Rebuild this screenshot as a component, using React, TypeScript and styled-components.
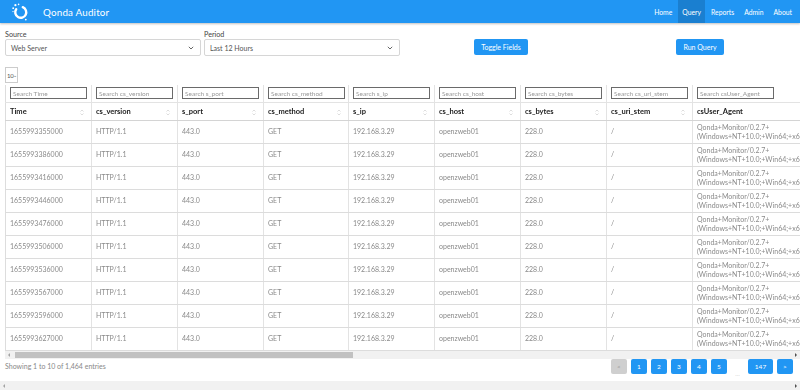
import React from "react";
import styled, { createGlobalStyle } from "styled-components";

const Global = createGlobalStyle`
  body {
    margin: 0;
    font-family: Lato, "Noto Sans", sans-serif;
    background: #fff;
    color: #333;
    -webkit-font-smoothing: antialiased;
    overflow: hidden;
  }
  * { box-sizing: border-box; }
`;

const NavBar = styled.header`
  height: 23px;
  background: #2196f3;
  display: flex;
  align-items: stretch;
  justify-content: space-between;
  box-shadow: 0 1px 2px rgba(0,0,0,0.25);
  padding-right: 4px;
`;
const Brand = styled.div`
  display: flex;
  align-items: center;
  gap: 14px;
  padding-left: 11px;
  color: #fff;
  font-size: 9.8px;
  letter-spacing: 0.2px;
`;
const NavList = styled.nav`
  display: flex;
  align-items: stretch;
`;
const NavItem = styled.a<{ $active?: boolean }>`
  display: flex;
  align-items: center;
  padding: 0 4px;
  margin-left: 2px;
  color: #fff;
  font-size: 6.8px;
  text-decoration: none;
  background: ${(p) => (p.$active ? "#1a7fd0" : "transparent")};
`;

const FormRow = styled.div`
  display: grid;
  grid-template-columns: repeat(4, 1fr);
  column-gap: 3px;
  padding: 7px 2px 0 5px;
  align-items: end;
`;
const Field = styled.div`
  display: flex;
  flex-direction: column;
`;
const Label = styled.label`
  font-size: 7.2px;
  line-height: 9px;
  font-weight: 400;
  color: #444;
`;
const SelectBox = styled.div`
  height: 17px;
  border: 1px solid #d6d6d6;
  border-radius: 2px;
  display: flex;
  align-items: center;
  justify-content: space-between;
  padding: 0 6px 0 5px;
  font-size: 7px;
  color: #555;
`;
const ButtonCell = styled.div`
  display: flex;
  justify-content: center;
  padding-bottom: 1px;
`;
const Button = styled.button`
  height: 16px;
  border: none;
  border-radius: 2px;
  background: #2196f3;
  color: #fff;
  font-family: inherit;
  font-size: 7px;
  padding: 0 7px;
`;

const LengthSelect = styled.div`
  margin: 11px 0 2px 5px;
  width: 13px;
  height: 16px;
  border: 1px solid #ccc;
  font-size: 6px;
  color: #555;
  display: flex;
  align-items: center;
  padding-left: 1px;
  letter-spacing: -0.3px;
`;

const TableWrap = styled.div`
  margin-left: 5px;
  overflow: hidden;
  will-change: transform;
`;
const Table = styled.table`
  border-collapse: collapse;
  table-layout: fixed;
  border-left: 1px solid #ddd;
`;
const SearchCell = styled.th`
  height: 17px;
  padding: 0 4px;
  border-right: 1px solid #e3e3e3;
  border-bottom: 1px solid #e3e3e3;
  text-align: left;
`;
const SearchInput = styled.div`
  width: 77px;
  height: 12px;
  border: 1px solid #6a6a6a;
  font-size: 6.5px;
  font-weight: normal;
  color: #999;
  display: flex;
  align-items: center;
  padding-left: 2px;
  white-space: nowrap;
  overflow: hidden;
`;
const HeadCell = styled.th`
  height: 18px;
  padding: 0 4px;
  border-right: 1px solid #e3e3e3;
  border-bottom: 1px solid #d4d4d4;
  text-align: left;
  font-size: 7.5px;
  font-weight: 700;
  color: #222;
  position: relative;
  white-space: nowrap;
`;
const SortIcon = styled.svg`
  position: absolute;
  right: 7px;
  top: 6px;
`;
const Cell = styled.td`
  height: 23px;
  padding: 0 4px;
  border-right: 1px solid #e3e3e3;
  border-bottom: 1px solid #dcdcdc;
  font-size: 7px;
  line-height: 8.5px;
  color: #8a8a8a;
  white-space: nowrap;
  overflow: hidden;
`;

const ScrollBar = styled.div<{ $h: number; $ml?: number }>`
  height: ${(p) => p.$h}px;
  margin-left: ${(p) => p.$ml ?? 0}px;
  background: #f1f1f1;
  display: flex;
  align-items: stretch;
`;
const ScrollArrow = styled.div<{ $dir: "left" | "right" }>`
  width: 8px;
  display: flex;
  align-items: center;
  justify-content: center;
  &::after {
    content: "";
    border-top: 2px solid transparent;
    border-bottom: 2px solid transparent;
    ${(p) => (p.$dir === "left" ? "border-right: 2px solid #a3a3a3;" : "border-left: 2px solid #505050;")}
  }
`;
const ScrollTrack = styled.div`
  flex: 1;
  display: flex;
  align-items: stretch;
  padding: 1px 0;
`;
const ScrollThumb = styled.div`
  background: #c1c1c1;
  margin-left: 2px;
`;

const Footer = styled.div`
  display: flex;
  justify-content: space-between;
  align-items: center;
  padding: 0 7px 0 5px;
  height: 15px;
  margin-bottom: 7px;
`;
const Info = styled.div`
  font-size: 7px;
  color: #888;
`;
const Pager = styled.div`
  display: flex;
  gap: 4px;
  align-items: center;
`;
const PageBtn = styled.div<{ $disabled?: boolean; $w?: number }>`
  height: 15px;
  width: ${(p) => p.$w ?? 16}px;
  border-radius: 2px;
  background: ${(p) => (p.$disabled ? "#cfcfcf" : "#2196f3")};
  color: ${(p) => (p.$disabled ? "#999" : "#fff")};
  font-size: 6.5px;
  display: flex;
  align-items: center;
  justify-content: center;
`;
const Ellipsis = styled.div`
  width: 13px;
  height: 15px;
  display: flex;
  align-items: flex-end;
  justify-content: center;
  font-size: 6px;
  color: #ccc;
  line-height: 5px;
  margin-bottom: -4px;
`;

const Logo = () => (
  <svg width="18" height="18" viewBox="0 0 18 18">
    <path d="M5.2 6.2 A5.5 5.5 0 1 0 11.8 4.2" fill="none" stroke="#fff" strokeWidth="2.4" strokeLinecap="round" />
    <circle cx="4.4" cy="2.2" r="1.1" fill="#fff" />
    <circle cx="2.2" cy="5.2" r="0.9" fill="#fff" />
    <circle cx="7.6" cy="1.4" r="0.8" fill="#fff" />
    <circle cx="2" cy="8.6" r="0.7" fill="#fff" />
    <circle cx="14.8" cy="16.6" r="0.9" fill="#fff" />
  </svg>
);

const Chevron = () => (
  <svg width="6" height="4" viewBox="0 0 6 4">
    <path d="M0.8 0.8 L3 3 L5.2 0.8" fill="none" stroke="#555" strokeWidth="0.9" />
  </svg>
);

const Sort = () => (
  <SortIcon width="4" height="7" viewBox="0 0 4 7">
    <path d="M0.5 2.5 L2 1 L3.5 2.5 M0.5 4.5 L2 6 L3.5 4.5" fill="none" stroke="#cfcfcf" strokeWidth="0.7" />
  </SortIcon>
);

const columns: { key: string; w: number }[] = [
  { key: "Time", w: 86 },
  { key: "cs_version", w: 86 },
  { key: "s_port", w: 86 },
  { key: "cs_method", w: 85 },
  { key: "s_ip", w: 86 },
  { key: "cs_host", w: 86 },
  { key: "cs_bytes", w: 86 },
  { key: "cs_uri_stem", w: 86 },
  { key: "csUser_Agent", w: 200 },
  { key: "cs_uri_query", w: 86 },
  { key: "cs_Referer", w: 86 },
  { key: "cs_username", w: 86 },
  { key: "c_ip", w: 86 },
  { key: "sc_status", w: 86 },
  { key: "sc_substatus", w: 86 },
  { key: "sc_win32_status", w: 86 },
  { key: "time_taken", w: 86 },
  { key: "s_sitename", w: 86 },
  { key: "s_computername", w: 86 },
  { key: "sc_bytes", w: 86 },
];
const totalWidth = columns.reduce((s, c) => s + c.w, 0);
const visibleWidth = 795;

const times = [
  "1655993355000", "1655993386000", "1655993416000", "1655993446000", "1655993476000",
  "1655993506000", "1655993536000", "1655993567000", "1655993596000", "1655993627000",
];

const extra: Record<string, string> = {
  cs_uri_query: "-",
  cs_Referer: "-",
  cs_username: "-",
  c_ip: "192.168.3.21",
  sc_status: "200.0",
  sc_substatus: "0.0",
  sc_win32_status: "0.0",
  time_taken: "15.0",
  s_sitename: "W3SVC1",
  s_computername: "OPENZWEB01",
  sc_bytes: "2781.0",
};

const cellValue = (key: string, t: string): React.ReactNode => {
  switch (key) {
    case "Time": return t;
    case "cs_version": return "HTTP/1.1";
    case "s_port": return "443.0";
    case "cs_method": return "GET";
    case "s_ip": return "192.168.3.29";
    case "cs_host": return "openzweb01";
    case "cs_bytes": return "228.0";
    case "cs_uri_stem": return "/";
    case "csUser_Agent":
      return (<>Qonda+Monitor/0.2.7+<br />(Windows+NT+10.0;+Win64;+x64)</>);
    default: return extra[key];
  }
};

export default function App() {
  const thumbPct = (visibleWidth / totalWidth) * 100;
  return (
    <>
      <Global />
      <NavBar>
        <Brand>
          <Logo />
          <span>Qonda Auditor</span>
        </Brand>
        <NavList>
          <NavItem>Home</NavItem>
          <NavItem $active>Query</NavItem>
          <NavItem>Reports</NavItem>
          <NavItem>Admin</NavItem>
          <NavItem>About</NavItem>
        </NavList>
      </NavBar>
      <FormRow>
        <Field>
          <Label>Source</Label>
          <SelectBox>Web Server<Chevron /></SelectBox>
        </Field>
        <Field>
          <Label>Period</Label>
          <SelectBox>Last 12 Hours<Chevron /></SelectBox>
        </Field>
        <ButtonCell><Button>Toggle Fields</Button></ButtonCell>
        <ButtonCell><Button>Run Query</Button></ButtonCell>
      </FormRow>
      <LengthSelect>10<span style={{ fontSize: 5 }}>⌄</span></LengthSelect>
      <TableWrap>
        <Table style={{ width: totalWidth }}>
          <colgroup>
            {columns.map((c) => (<col key={c.key} style={{ width: c.w }} />))}
          </colgroup>
          <thead>
            <tr>
              {columns.map((c) => (
                <SearchCell key={c.key}><SearchInput>Search {c.key}</SearchInput></SearchCell>
              ))}
            </tr>
            <tr>
              {columns.map((c) => (
                <HeadCell key={c.key}>
                  {c.key}
                  <Sort />
                </HeadCell>
              ))}
            </tr>
          </thead>
          <tbody>
            {times.map((t) => (
              <tr key={t}>
                {columns.map((c) => (<Cell key={c.key}>{cellValue(c.key, t)}</Cell>))}
              </tr>
            ))}
          </tbody>
        </Table>
      </TableWrap>
      <ScrollBar $h={8} $ml={5}>
        <ScrollArrow $dir="left" />
        <ScrollTrack>
          <ScrollThumb style={{ width: `${thumbPct}%` }} />
        </ScrollTrack>
        <ScrollArrow $dir="right" />
      </ScrollBar>
      <Footer>
        <Info>Showing 1 to 10 of 1,464 entries</Info>
        <Pager>
          <PageBtn $disabled>&lt;</PageBtn>
          <PageBtn>1</PageBtn>
          <PageBtn>2</PageBtn>
          <PageBtn>3</PageBtn>
          <PageBtn>4</PageBtn>
          <PageBtn>5</PageBtn>
          <Ellipsis>…</Ellipsis>
          <PageBtn $w={25}>147</PageBtn>
          <PageBtn>&gt;</PageBtn>
        </Pager>
      </Footer>
      <ScrollBar $h={10}>
        <ScrollArrow $dir="left" />
        <ScrollTrack />
        <ScrollArrow $dir="right" />
      </ScrollBar>
    </>
  );
}
